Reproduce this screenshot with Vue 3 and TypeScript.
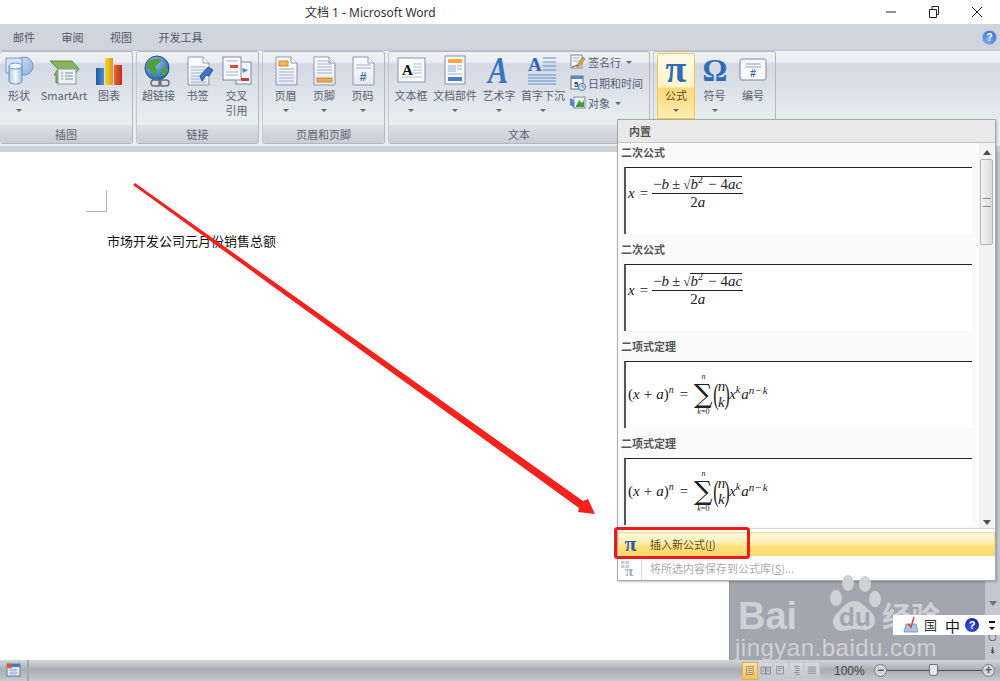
<script setup lang="ts">
type RibbonBtn = {
  label: string;
  second?: string;
  icon: string;
  width: number;
  caret?: boolean;
  active?: boolean;
};
type RibbonGroup = {
  title: string;
  width: number;
  pad: number;
  buttons: RibbonBtn[];
  small?: { label: string; icon: string; caret?: boolean }[];
};

const tabs = ['邮件', '审阅', '视图', '开发工具'];

const docBase =
  '<path d="M6 2H21L27 8V30H6Z" fill="url(#gDoc)" stroke="#8a97ab"/><path d="M21 2V8H27" fill="#fff" stroke="#8a97ab"/>';
const lines = (from: number, to: number, color = '#9fb0cc') => {
  let s = '';
  for (let y = from; y <= to; y += 3) s += `<path d="M9 ${y}H24" stroke="${color}"/>`;
  return s;
};

const icons: Record<string, string> = {
  shapes:
    '<circle cx="21" cy="11" r="9" fill="url(#gSky)" stroke="#6b93bd"/><rect x="3" y="3" width="16" height="15" fill="#d7e6f6" stroke="#7b9cc0"/><path d="M6 11V26C6 30 19 30 19 26V11Z" fill="url(#gCyl)" stroke="#6b93bd"/><ellipse cx="12.500" cy="11" rx="6.500" ry="3" fill="#f3f8fd" stroke="#6b93bd"/>',
  smartart:
    '<path d="M2 6H24L31 14L24 22V28H8V20H6L10 14Z" fill="#86b45c" stroke="#5f8f3c"/><rect x="10" y="14" width="18" height="15" fill="#eef1f3" stroke="#8f9aa3"/><path d="M13 18H15M17 18H25M13 21H15M17 21H25M13 24H15M17 24H25" stroke="#6f93a8"/>',
  chart:
    '<rect x="3" y="13" width="8" height="17" fill="url(#gBarB)"/><rect x="12" y="3" width="8" height="27" fill="url(#gBarY)"/><rect x="21" y="10" width="8" height="20" fill="url(#gBarR)"/>',
  globe:
    '<circle cx="14" cy="13" r="12" fill="url(#gGlobe)" stroke="#24507e"/><path d="M5 7C9 3 16 3 18 5C19 8 14 8 13 11C12 14 16 16 13 20C9 20 8 15 5 14C3 12 4 9 5 7ZM19 13C22 12 25 13 25 15C24 19 21 21 19 21C18 18 18 15 19 13Z" fill="#4f9d3e"/><rect x="8" y="25" width="10" height="6" rx="3" fill="none" stroke="#68727e" stroke-width="1.5"/><rect x="16" y="25" width="10" height="6" rx="3" fill="none" stroke="#68727e" stroke-width="1.5"/>',
  bookmark:
    docBase +
    lines(12, 27) +
    '<path d="M18 21L26 12L31 15L27 21L24 20L20 26Z" fill="#3d77c4" stroke="#23568f"/>',
  crossref:
    '<rect x="15" y="7" width="15" height="22" fill="#f3f5f9" stroke="#7d8ba0"/><rect x="2" y="2" width="18" height="23" fill="#fafbfd" stroke="#7d8ba0"/><path d="M5 6H17M5 17H17M5 20H17" stroke="#9fb0cc"/><rect x="9" y="10" width="8" height="3" fill="#e04a33"/><rect x="20" y="23" width="8" height="3" fill="#c9402c"/><path d="M21 13L27 15L22 18Z" fill="#4f88cf"/>',
  header:
    docBase + '<rect x="9" y="6" width="9" height="5" fill="#f7b457" stroke="#d78a2f"/>' + lines(14, 27),
  footer:
    docBase + lines(6, 20) + '<rect x="9" y="23" width="15" height="4" fill="#f0a650" stroke="#d78a2f"/>',
  pagenum:
    docBase +
    lines(10, 13) +
    '<text x="16" y="26" font-size="12" font-weight="700" font-family="Liberation Sans" text-anchor="middle" fill="#4a6a94">#</text>',
  textbox:
    '<rect x="3" y="3" width="27" height="24" fill="#fafbfd" stroke="#8793a6"/><text x="7" y="20" font-size="15" font-weight="700" font-family="Liberation Serif" fill="#111">A</text><path d="M18 9H27M18 12H27M18 15H27M18 18H27M7 22H27" stroke="#b4c0d2"/>',
  parts:
    '<rect x="6" y="1" width="20" height="28" fill="#f5f7fb" stroke="#8793a6"/><rect x="9" y="4" width="14" height="4" fill="#f6a93c"/><rect x="9" y="10" width="8" height="7" fill="#c7d3e6"/><path d="M18 11H23M18 14H23M9 19H23" stroke="#9fb0cc"/><rect x="9" y="22" width="14" height="4" fill="#4b7fc4"/>',
  wordart:
    '<text transform="translate(15 28) scale(.82 1)" font-size="37" font-style="italic" font-weight="700" font-family="Liberation Serif" text-anchor="middle" fill="#3b74bd">A</text>',
  dropcap:
    '<text x="1" y="16" font-size="19" font-weight="700" font-family="Liberation Serif" fill="#2f66b3">A</text><path d="M16 3H29M16 7H29M16 11H29M16 15H29M1 20H29M1 23H29M1 26H29M1 29H29" stroke="#5b8ed0"/>',
  pi: '<text x="16" y="27" font-size="38" font-weight="700" font-family="Liberation Serif" text-anchor="middle" fill="#2f6cb8">π</text>',
  omega:
    '<text x="16" y="26" font-size="31" font-weight="700" font-family="Liberation Serif" text-anchor="middle" fill="#2f6cb8">Ω</text>',
  numbering:
    '<rect x="3" y="4" width="26" height="21" rx="2" fill="#f8f9fc" stroke="#7d8ba0"/><path d="M8 9H24M8 12H24" stroke="#c5cdd9" stroke-width="2"/><text x="16" y="22" font-size="10" font-weight="700" font-family="Liberation Sans" text-anchor="middle" fill="#4a6a94">#</text>',
  signature:
    '<rect x="1" y="1" width="11" height="13" fill="#f4f6fa" stroke="#7d8ba0"/><path d="M3 4H10M3 7H10" stroke="#9fb0cc"/><path d="M6 12L13 3L15 5L9 13Z" fill="#d9a53c" stroke="#7f6a2f" stroke-width=".6"/><path d="M2 13L8 11" stroke="#c0392b"/>',
  datetime:
    '<rect x="1" y="1" width="12" height="13" fill="#f4f6fa" stroke="#5e728f"/><rect x="1" y="1" width="12" height="3" fill="#5e86bd"/><text x="4" y="12" font-size="8" font-weight="700" font-family="Liberation Sans" fill="#333">5</text><circle cx="12" cy="12" r="3.5" fill="#cfe0f3" stroke="#4c79b0"/><path d="M12 10V12H14" stroke="#33557f" stroke-width=".7" fill="none"/>',
  object:
    '<path d="M0 3L5 6V13L0 10Z" fill="#4e86cc"/><rect x="4" y="2" width="11" height="11" fill="#eef2f7" stroke="#7d8ba0"/><path d="M6 11L9 5L12 8L14 5V12H6Z" fill="#4a9a3a"/>'
};

const groups: RibbonGroup[] = [
  {
    title: '插图',
    width: 133,
    pad: 0,
    buttons: [
      { label: '形状', icon: 'shapes', width: 38, caret: true },
      { label: 'SmartArt', icon: 'smartart', width: 52 },
      { label: '图表', icon: 'chart', width: 38 }
    ]
  },
  {
    title: '链接',
    width: 123,
    pad: 2,
    buttons: [
      { label: '超链接', icon: 'globe', width: 39 },
      { label: '书签', icon: 'bookmark', width: 39 },
      { label: '交叉', second: '引用', icon: 'crossref', width: 39 }
    ]
  },
  {
    title: '页眉和页脚',
    width: 123,
    pad: 3,
    buttons: [
      { label: '页眉', icon: 'header', width: 39, caret: true },
      { label: '页脚', icon: 'footer', width: 38, caret: true },
      { label: '页码', icon: 'pagenum', width: 39, caret: true }
    ]
  },
  {
    title: '文本',
    width: 262,
    pad: 2,
    buttons: [
      { label: '文本框', icon: 'textbox', width: 40, caret: true },
      { label: '文档部件', icon: 'parts', width: 48, caret: true },
      { label: '艺术字', icon: 'wordart', width: 40, caret: true },
      { label: '首字下沉', icon: 'dropcap', width: 48, caret: true }
    ],
    small: [
      { label: '签名行', icon: 'signature', caret: true },
      { label: '日期和时间', icon: 'datetime' },
      { label: '对象', icon: 'object', caret: true }
    ]
  },
  {
    title: '',
    width: 123,
    pad: 3,
    buttons: [
      { label: '公式', icon: 'pi', width: 38, caret: true, active: true },
      { label: '符号', icon: 'omega', width: 39, caret: true },
      { label: '编号', icon: 'numbering', width: 38 }
    ]
  }
];

const gallery = [
  { title: '二次公式', kind: 'quadratic' },
  { title: '二次公式', kind: 'quadratic' },
  { title: '二项式定理', kind: 'binomial' },
  { title: '二项式定理', kind: 'binomial' }
];

const viewIcons = [
  'M5 4H15V16H5ZM7 7H13M7 10H13M7 13H13',
  'M3 5H10V15H3ZM10 5H17V15H10ZM5 8H8M5 11H8M12 8H15M12 11H15',
  'M4 4H14V15H4ZM6 7H12M6 10H10',
  'M6 4H14M8 7H14M8 10H14M6 13H14M8 16H14',
  'M4 5H16M4 8H16M4 11H16M4 14H16'
];
</script>

<template>
  <div class="word">
    <svg class="defs" width="0" height="0">
      <defs>
        <linearGradient id="gDoc" x1="0" y1="0" x2="0" y2="1"><stop offset="0" stop-color="#fff" /><stop offset="1" stop-color="#e3e9f4" /></linearGradient>
        <linearGradient id="gSky" x1="0" y1="0" x2="1" y2="1"><stop offset="0" stop-color="#d7e8fa" /><stop offset="1" stop-color="#86b2e2" /></linearGradient>
        <linearGradient id="gCyl" x1="0" y1="0" x2="1" y2="0"><stop offset="0" stop-color="#a6c8ec" /><stop offset=".5" stop-color="#f4f9fe" /><stop offset="1" stop-color="#9ac0e8" /></linearGradient>
        <linearGradient id="gBarB" x1="0" y1="0" x2="1" y2="0"><stop offset="0" stop-color="#1f5aa0" /><stop offset="1" stop-color="#4d8ed6" /></linearGradient>
        <linearGradient id="gBarY" x1="0" y1="0" x2="1" y2="0"><stop offset="0" stop-color="#f7d335" /><stop offset="1" stop-color="#d89b12" /></linearGradient>
        <linearGradient id="gBarR" x1="0" y1="0" x2="1" y2="0"><stop offset="0" stop-color="#ee6136" /><stop offset="1" stop-color="#b8321c" /></linearGradient>
        <radialGradient id="gGlobe" cx=".4" cy=".3" r=".8"><stop offset="0" stop-color="#8cc4f2" /><stop offset="1" stop-color="#1c5aa3" /></radialGradient>
      </defs>
    </svg>

    <header class="titlebar">
      <span class="doc-title">文档 1 - Microsoft Word</span>
      <div class="win-controls">
        <svg width="14" height="14" viewBox="0 0 14 14"><path d="M2 7H12" stroke="#222" stroke-width="1" /></svg>
        <svg width="14" height="14" viewBox="0 0 14 14"><path d="M2.5 4.500H9.500V12.500H2.500ZM5 4.500V1.500H11.500V9.500H9.500" fill="none" stroke="#222" /></svg>
        <svg width="14" height="14" viewBox="0 0 14 14"><path d="M2 2L12 12M12 2L2 12" stroke="#222" stroke-width="1" /></svg>
      </div>
    </header>

    <nav class="tabs">
      <span v-for="t in tabs" :key="t" class="tab">{{ t }}</span>
      <span class="help">?</span>
    </nav>

    <section class="ribbon">
      <div v-for="(g, i) in groups" :key="i" class="group" :style="{ width: g.width + 'px' }">
        <div class="group-body" :style="{ paddingLeft: g.pad + 'px' }">
          <div
            v-for="b in g.buttons"
            :key="b.label"
            class="big-btn"
            :class="{ active: b.active }"
            :style="{ width: b.width + 'px' }"
          >
            <svg class="big-icon" width="32" height="32" viewBox="0 0 32 32" v-html="icons[b.icon]"></svg>
            <span class="btn-label">{{ b.label }}</span>
            <span v-if="b.second" class="btn-label">{{ b.second }}</span>
            <i v-if="b.caret" class="caret"></i>
          </div>
          <div v-if="g.small" class="small-col">
            <div v-for="s in g.small" :key="s.label" class="small-btn">
              <svg width="16" height="16" viewBox="0 0 16 16" v-html="icons[s.icon]"></svg>
              <span>{{ s.label }}</span>
              <i v-if="s.caret" class="caret small"></i>
            </div>
          </div>
        </div>
        <div class="group-title">{{ g.title }}</div>
      </div>
    </section>
    <div class="ruler-band"></div>

    <main class="workspace">
      <div class="page">
        <div class="crop-mark"></div>
        <p class="para">市场开发公司元月份销售总额</p>
      </div>
      <div class="gutter"></div>
      <aside class="doc-scroll">
        <i class="tri-down"></i>
        <span class="browse">○</span>
        <span class="browse next">⯯</span>
      </aside>
    </main>

    <footer class="statusbar">
      <div class="macro-cell">
        <svg width="15" height="14" viewBox="0 0 15 14">
          <rect x="1" y="1" width="13" height="12" fill="#dfe8f4" stroke="#5d7fa8" />
          <rect x="1" y="1" width="13" height="3" fill="#4a78b4" />
          <path d="M3 7H12M3 10H12M6 5V13M9 5V13" stroke="#9db4d2" />
          <circle cx="3.500" cy="3" r="2.500" fill="#e5532f" />
        </svg>
      </div>
      <div class="status-right">
        <div class="views">
          <span v-for="(d, i) in viewIcons" :key="i" class="view-btn" :class="{ on: i === 0 }">
            <svg width="15" height="17" viewBox="0 0 20 20"><path :d="d" fill="none" stroke="#6d7480" /></svg>
          </span>
        </div>
        <span class="zoom-val">100%</span>
        <div class="zoom-slider">
          <span class="zoom-round">−</span>
          <span class="zoom-track"><i class="zoom-thumb"></i></span>
          <span class="zoom-round">+</span>
        </div>
      </div>
    </footer>

    <!-- 公式下拉菜单 -->
    <div class="menu">
      <div class="menu-head">内置</div>
      <div class="menu-main">
        <div class="gallery">
          <div v-for="(item, i) in gallery" :key="i" class="gallery-item">
            <div class="item-title">{{ item.title }}</div>
            <div class="eq-box" :class="item.kind">
              <div v-if="item.kind === 'quadratic'" class="eq">
                <span class="v">x</span><span class="op">=</span>
                <span class="frac">
                  <span class="num"><span>−</span><span class="v">b</span><span class="pm">±</span><span class="rad">√</span><span class="under"><span class="v">b</span><sup>2</sup><span class="minus">−</span>4<span class="v">ac</span></span></span>
                  <span class="den">2<span class="v">a</span></span>
                </span>
              </div>
              <div v-else class="eq">
                <span>(</span><span class="v">x</span><span class="minus">+</span><span class="v">a</span><span>)</span><sup class="v">n</sup><span class="op">=</span>
                <span class="sum"><small class="v">n</small><b>∑</b><small><span class="v">k</span>=0</small></span>
                <span class="paren">(</span><span class="binom"><span class="v">n</span><span class="v">k</span></span><span class="paren">)</span>
                <span class="v">x</span><sup class="v">k</sup><span class="v">a</span><sup class="v wide">n−k</sup>
              </div>
            </div>
          </div>
        </div>
        <div class="menu-scroll">
          <i class="tri-up"></i>
          <div class="thumb"><span></span></div>
          <i class="tri-down dark"></i>
        </div>
      </div>
      <div class="menu-foot">
        <div class="foot-row hot">
          <span class="foot-icon pi">π</span>
          <span>插入新公式(<u>I</u>)</span>
        </div>
        <div class="foot-row off">
          <span class="foot-icon cell">
            <svg width="20" height="18" viewBox="0 0 20 18">
              <rect x="1" y="2" width="8" height="7" fill="#c4cad6" />
              <path d="M1 5.500H9M5 2V9" stroke="#fff" />
              <text x="5" y="17" font-size="15" font-weight="700" font-family="Liberation Serif" fill="#a6adb9">π</text>
            </svg>
          </span>
          <span>将所选内容保存到公式库(<u>S</u>)...</span>
        </div>
      </div>
    </div>

    <!-- 百度经验水印 -->
    <div class="watermark">
      <span class="wm-bai">Bai</span>
      <svg class="wm-paw" width="56" height="66" viewBox="0 0 56 66">
        <ellipse cx="10" cy="24" rx="6" ry="8" fill="#d0d1d5" />
        <ellipse cx="22" cy="9" rx="6" ry="8" fill="#d0d1d5" />
        <ellipse cx="39" cy="10" rx="6" ry="8" fill="#d0d1d5" />
        <ellipse cx="49" cy="25" rx="6" ry="8" fill="#d0d1d5" />
        <path d="M28 27C36 27 39 33 45 38C53 46 48 57 38 56C32 55 24 55 18 57C8 58 3 47 11 39C17 34 20 27 28 27Z" fill="#d0d1d5" />
      </svg>
      <span class="wm-du">du</span>
      <span class="wm-jy">经验</span>
      <span class="wm-url">jingyan.baidu.com</span>
    </div>

    <!-- 输入法状态条 -->
    <div class="ime">
      <svg width="16" height="18" viewBox="0 0 16 18">
        <path d="M3 8H13L15 16H1Z" fill="#a9c4e6" stroke="#5f84b3" stroke-width=".7" />
        <path d="M5 8L8 11L11 1" fill="none" stroke="#e8402c" stroke-width="1.500" />
      </svg>
      <span class="ime-box">国</span>
      <span class="ime-zh">中</span>
      <span class="ime-help">?</span>
      <span class="ime-more"><i></i><em></em></span>
    </div>

    <!-- 标注 -->
    <svg class="annot" width="1000" height="681" viewBox="0 0 1000 681">
      <path d="M133 185L135 183L583 501L588 499L595 514L578 512L579 508Z" fill="#f4211c" />
      <rect x="615.500" y="528.500" width="133" height="29" rx="2" fill="none" stroke="#ee1a1a" stroke-width="3" />
    </svg>
  </div>
</template>

<style scoped>
.word {
  position: relative;
  width: 1000px;
  height: 681px;
  overflow: hidden;
  display: flex;
  flex-direction: column;
  background: #fff;
  font-family: "Noto Sans CJK SC", "Noto Sans", sans-serif;
  font-size: 11px;
  color: #586274;
}
.defs {
  position: absolute;
}

/* 标题栏 */
.titlebar {
  height: 24px;
  flex: none;
  display: flex;
  align-items: center;
  padding-left: 305px;
}
.doc-title {
  font-family: "Noto Sans", "Noto Sans CJK SC", sans-serif;
  font-size: 12px;
  color: #333;
  white-space: nowrap;
}
.win-controls {
  margin-left: auto;
  display: flex;
  gap: 29px;
  padding-right: 16px;
}

/* 选项卡 */
.tabs {
  height: 26px;
  flex: none;
  background: #d0d4dc;
  display: flex;
  align-items: center;
  gap: 26.500px;
  padding: 0 3px 0 13px;
}
.tab {
  color: #4f596b;
  white-space: nowrap;
}
.help {
  margin-left: auto;
  width: 13px;
  height: 13px;
  border-radius: 50%;
  background: radial-gradient(circle at 40% 70%, #7fb0ef, #2a62c0);
  border: 1px solid #9db4d8;
  color: #fff;
  font: 700 10px/13px "Liberation Sans", sans-serif;
  text-align: center;
}

/* 功能区 */
.ribbon {
  height: 95px;
  flex: none;
  display: flex;
  gap: 3px;
  box-sizing: border-box;
  border-top: 1px solid #bfc3ca;
  background: linear-gradient(#f0f2f6 0, #e9ecf2 11px, #d3d8e4 13px, #e8edee 70px, #e8edee 100%);
}
.group {
  height: 93px;
  flex: none;
  box-sizing: border-box;
  display: flex;
  flex-direction: column;
  border: 1px solid #b4b8bf;
  border-left-color: #c3c7ce;
  border-radius: 3px;
  background: linear-gradient(#f0f2f6 0, #e9ecf2 10px, #d3d8e4 12px, #e8edee 68px);
}
.group:first-child {
  border-left: none;
}
.group-body {
  flex: 1;
  display: flex;
  min-height: 0;
}
.group-title {
  height: 18px;
  flex: none;
  line-height: 18px;
  text-align: center;
  color: #5c6574;
  background: linear-gradient(#dde0e6, #c9ccd4);
  border-radius: 0 0 3px 3px;
}
.big-btn {
  flex: none;
  height: 66px;
  margin-top: 1px;
  box-sizing: border-box;
  display: flex;
  flex-direction: column;
  align-items: center;
  padding-top: 2px;
}
.big-btn.active {
  border: 1px solid #f2c64f;
  border-radius: 2px;
  background: linear-gradient(#fffbe8 0, #fff3c8 33px, #ffd777 34px, #ffeeb0 100%);
  padding-top: 1px;
}
.big-icon {
  flex: none;
  margin-bottom: 1px;
  overflow: visible;
}
.btn-label {
  line-height: 15px;
  white-space: nowrap;
}
.big-btn.active .btn-label {
  color: #5a4a2a;
}
.caret {
  display: block;
  width: 0;
  height: 0;
  margin-top: 6px;
  border: 3px solid transparent;
  border-top: 3px solid #666;
  border-bottom: none;
}
.small-col {
  margin-left: 3px;
  display: flex;
  flex-direction: column;
}
.small-btn {
  height: 20.500px;
  display: flex;
  align-items: center;
  gap: 2px;
  white-space: nowrap;
}
.caret.small {
  margin: 0 0 0 3px;
}

.ruler-band {
  height: 7px;
  flex: none;
  background: #cdd1da;
  border-top: 1px solid #eceef2;
  box-sizing: border-box;
}

/* 文档区 */
.workspace {
  flex: 1;
  min-height: 0;
  display: flex;
}
.page {
  width: 730px;
  flex: none;
  background: #fff;
  border-right: 1px solid #8d9096;
  box-sizing: border-box;
}
.crop-mark {
  width: 21px;
  height: 22px;
  margin: 38px 0 0 86px;
  box-sizing: border-box;
  border-right: 1px solid #b5b5b5;
  border-bottom: 1px solid #b5b5b5;
}
.para {
  margin: 19px 0 0 107px;
  font-size: 13px;
  line-height: 20px;
  color: #111;
}
.gutter {
  flex: 1;
  background: #a3a6ae;
}
.doc-scroll {
  width: 15px;
  flex: none;
  background: #c4c7ce;
  display: flex;
  flex-direction: column;
  align-items: center;
  justify-content: flex-end;
  color: #444;
  padding-bottom: 2px;
  box-sizing: border-box;
}
.tri-down {
  display: block;
  width: 0;
  height: 0;
  margin-bottom: 24px;
  border: 4px solid transparent;
  border-top: 5px solid #6c7280;
  border-bottom: none;
}
.browse {
  font: 10px/14px "DejaVu Sans", sans-serif;
}
.browse.next {
  font-size: 9px;
}

/* 状态栏 */
.statusbar {
  height: 21px;
  flex: none;
  display: flex;
  background: linear-gradient(#d2d4d9 0, #c6c9cf 3px, #a9acb3 10px, #b9bcc2 16px, #c8cacf 100%);
}
.macro-cell {
  width: 29px;
  box-sizing: border-box;
  padding: 3px 0 0 6px;
  border-right: 2px solid #a6a8ad;
}
.status-right {
  margin-left: auto;
  display: flex;
  align-items: center;
  padding-right: 5px;
}
.views {
  display: flex;
  margin-right: 14px;
}
.view-btn {
  width: 15.600px;
  height: 18px;
  display: flex;
  align-items: center;
  justify-content: center;
  background: linear-gradient(#d6d8dd, #c3c6cc);
  border: 1px solid #c9cbd0;
  box-sizing: border-box;
}
.view-btn.on {
  background: linear-gradient(#fde6a8, #f7bf58);
  border-color: #e0b050;
}
.zoom-val {
  width: 40px;
  font-family: "Liberation Sans", sans-serif;
  font-size: 12px;
  color: #444;
}
.zoom-slider {
  display: flex;
  align-items: center;
}
.zoom-round {
  width: 13px;
  height: 13px;
  box-sizing: border-box;
  border: 1px solid #777b84;
  border-radius: 50%;
  background: #d5d7dc;
  font: 700 12px/11px "Liberation Sans", sans-serif;
  text-align: center;
  color: #555;
}
.zoom-track {
  position: relative;
  width: 95px;
  height: 1px;
  background: #4c4f56;
}
.zoom-thumb {
  position: absolute;
  left: 42px;
  top: -6px;
  width: 7px;
  height: 10px;
  background: #e7e8eb;
  border: 1px solid #6d7078;
  border-radius: 1px 1px 3px 3px;
}

/* 下拉菜单 */
.menu {
  position: absolute;
  left: 617px;
  top: 119px;
  width: 379px;
  height: 462px;
  box-sizing: border-box;
  display: flex;
  flex-direction: column;
  background: #fff;
  border: 1px solid #a6a9ae;
  box-shadow: 1px 1px 2px rgba(0, 0, 0, 0.25);
  color: #555;
}
.menu-head {
  height: 23px;
  flex: none;
  box-sizing: border-box;
  padding-left: 11px;
  line-height: 22px;
  font-weight: 700;
  background: #e9e9e9;
  border-bottom: 1px solid #c6c6c6;
}
.menu-main {
  flex: 1;
  min-height: 0;
  display: flex;
}
.gallery {
  flex: 1;
  min-width: 0;
  overflow: hidden;
  background: #fafafa;
}
.gallery-item {
  height: 97px;
}
.item-title {
  height: 24px;
  padding-left: 3px;
  line-height: 18px;
  font-weight: 700;
}
.eq-box {
  height: 67px;
  margin-left: 6px;
  margin-right: 7px;
  box-sizing: border-box;
  background: #fff;
  border-top: 1px solid #222;
  border-left: 2px solid #555;
  padding-left: 2px;
}
.eq-box.quadratic {
  padding-top: 3px;
}
.eq {
  display: flex;
  align-items: center;
  height: 44px;
  font-family: "Liberation Serif", serif;
  font-size: 15px;
  color: #222;
  white-space: nowrap;
}
.binomial .eq {
  height: 64px;
}
.v {
  font-style: italic;
}
.op {
  margin: 0 4px 0 5px;
}
.minus {
  margin: 0 4px;
}
.pm {
  margin: 0 3px;
}
.eq sup {
  font-size: 10px;
  line-height: 1;
  align-self: center;
  margin-bottom: 8px;
  margin-right: 1px;
  vertical-align: super;
}
.eq sup.wide {
  font-size: 11px;
  letter-spacing: 0.5px;
}
.frac {
  display: flex;
  flex-direction: column;
  align-items: center;
  width: 91px;
}
.num {
  display: flex;
  align-items: baseline;
  height: 18px;
  line-height: 18px;
  border-bottom: 1px solid #222;
  width: 100%;
  justify-content: center;
}
.rad {
  font-size: 13px;
}
.under {
  border-top: 1px solid #222;
  line-height: 14px;
  height: 14px;
  display: inline-flex;
  align-items: baseline;
}
.den {
  line-height: 17px;
}
.sum {
  display: flex;
  flex-direction: column;
  align-items: center;
  margin: 0 1px 0 2px;
  line-height: 1;
}
.sum small {
  font-size: 8px;
  line-height: 9px;
}
.sum b {
  font-weight: 400;
  font-size: 26px;
  line-height: 26px;
  font-family: "DejaVu Serif", serif;
}
.paren {
  font-size: 30px;
  font-weight: 200;
  line-height: 1;
  transform: scaleX(0.55);
  margin: 0 -3px;
}
.binom {
  display: flex;
  flex-direction: column;
  line-height: 16px;
  align-items: center;
}
.menu-scroll {
  width: 15px;
  flex: none;
  margin-right: 1px;
  display: flex;
  flex-direction: column;
  align-items: center;
  background: #f2f2f2;
}
.tri-up {
  display: block;
  width: 0;
  height: 0;
  margin: 7px 0 4px;
  border: 4px solid transparent;
  border-bottom: 5px solid #46506e;
  border-top: none;
}
.thumb {
  width: 13px;
  height: 86px;
  flex: none;
  box-sizing: border-box;
  border: 1px solid #b5b5b5;
  border-radius: 2px;
  background: linear-gradient(90deg, #f5f5f5, #d9d9d9);
  display: flex;
  align-items: center;
  justify-content: center;
}
.thumb span {
  width: 8px;
  height: 7px;
  border-top: 1px solid #888;
  border-bottom: 1px solid #888;
}
.tri-down.dark {
  margin: auto 0 3px;
  border-top-color: #46506e;
}
.menu-foot {
  flex: none;
  height: 52px;
  padding-top: 3px;
  box-sizing: border-box;
  background: #fff;
  border-top: 1px solid #d9d9d9;
}
.foot-row {
  height: 24px;
  display: flex;
  align-items: center;
}
.foot-row.hot {
  color: #5b4a22;
  background: linear-gradient(#fff9dc 0, #fff0b8 40%, #ffdf7f 62%, #ffd868 100%);
  border: 1px solid #f0d88c;
  box-sizing: border-box;
}
.foot-row.off {
  color: #ababab;
}
.foot-icon {
  width: 23px;
  height: 100%;
  margin-right: 8px;
  flex: none;
  display: flex;
  align-items: center;
  justify-content: center;
}
.foot-icon.pi {
  font: 700 22px/1 "Liberation Serif", serif;
  color: #2a5fa8;
}
.foot-icon.cell {
  border-right: 1px solid #dcdcdc;
}

/* 水印 */
.watermark {
  position: absolute;
  left: 735px;
  top: 570px;
  width: 215px;
  height: 95px;
  color: #d0d1d5;
  font-family: "Liberation Sans", sans-serif;
  pointer-events: none;
}
.wm-bai {
  position: absolute;
  left: 3px;
  top: 24px;
  font-size: 38px;
  line-height: 44px;
  font-weight: 700;
}
.wm-paw {
  position: absolute;
  left: 91px;
  top: 4px;
}
.wm-du {
  position: absolute;
  left: 104px;
  top: 32px;
  font-size: 26px;
  line-height: 30px;
  font-weight: 700;
  color: #a3a6ae;
}
.wm-jy {
  position: absolute;
  left: 147px;
  top: 26px;
  font-family: "Noto Sans CJK SC", sans-serif;
  font-size: 29px;
  line-height: 38px;
  font-weight: 700;
}
.wm-url {
  position: absolute;
  left: 0;
  top: 64px;
  font-size: 24px;
  line-height: 28px;
  white-space: nowrap;
  letter-spacing: 0.5px;
}

/* 输入法 */
.ime {
  position: absolute;
  left: 893px;
  top: 615px;
  width: 107px;
  height: 20px;
  box-sizing: border-box;
  padding-left: 10px;
  background: #fff;
  display: flex;
  align-items: center;
  color: #111;
}
.ime-box {
  margin-left: 5px;
  width: 15px;
  font-size: 13px;
  line-height: 16px;
  color: #333;
}
.ime-zh {
  margin-left: 6px;
  font-size: 15px;
}
.ime-help {
  margin-left: 5px;
  width: 14px;
  height: 14px;
  border-radius: 50%;
  background: radial-gradient(circle at 40% 70%, #3556d8, #0b1f8f);
  color: #fff;
  font: 700 11px/14px "Liberation Sans", sans-serif;
  text-align: center;
}
.ime-more {
  margin-left: 10px;
  display: flex;
  flex-direction: column;
  align-items: center;
  gap: 2px;
}
.ime-more i {
  width: 6px;
  height: 2px;
  background: #111;
}
.ime-more em {
  width: 0;
  height: 0;
  margin-top: 2px;
  border: 3px solid transparent;
  border-top: 3px solid #111;
  border-bottom: none;
}

.annot {
  position: absolute;
  left: 0;
  top: 0;
  pointer-events: none;
}
</style>

<style>
html,
body {
  margin: 0;
  overflow: hidden;
}
</style>
